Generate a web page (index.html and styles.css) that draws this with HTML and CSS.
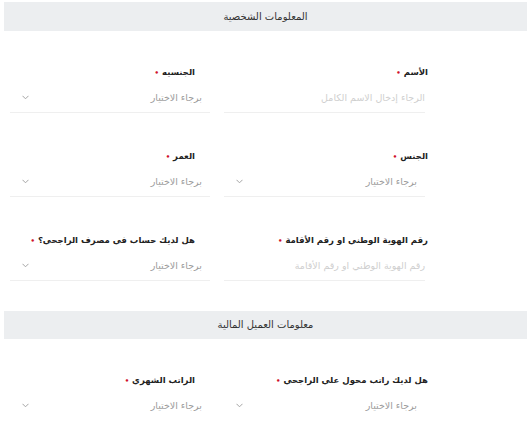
FILE: index.html
```html
<!DOCTYPE html>
<html lang="ar" dir="rtl">
<head>
<meta charset="utf-8">
<link rel="stylesheet" href="styles.css">
</head>
<body>
<div class="page">
  <div class="section-head">المعلومات الشخصية</div>
  <div class="grid g1">
    <div class="field">
      <div class="label">الأسم <span class="req">•</span></div>
      <div class="control input">الرجاء إدخال الاسم الكامل</div>
    </div>
    <div class="field left">
      <div class="label">الجنسيه <span class="req">•</span></div>
      <div class="control select"><span>برجاء الاختيار</span><svg class="chev" width="7" height="5" viewBox="0 0 7 5"><path d="M0.5 0.8 L3.5 3.8 L6.5 0.8" fill="none" stroke="#a5a5a5" stroke-width="1"/></svg></div>
    </div>
    <div class="field">
      <div class="label">الجنس <span class="req">•</span></div>
      <div class="control select"><span>برجاء الاختيار</span><svg class="chev" width="7" height="5" viewBox="0 0 7 5"><path d="M0.5 0.8 L3.5 3.8 L6.5 0.8" fill="none" stroke="#a5a5a5" stroke-width="1"/></svg></div>
    </div>
    <div class="field left">
      <div class="label">العمر <span class="req">•</span></div>
      <div class="control select"><span>برجاء الاختيار</span><svg class="chev" width="7" height="5" viewBox="0 0 7 5"><path d="M0.5 0.8 L3.5 3.8 L6.5 0.8" fill="none" stroke="#a5a5a5" stroke-width="1"/></svg></div>
    </div>
    <div class="field">
      <div class="label">رقم الهوية الوطني او رقم الأقامة <span class="req">•</span></div>
      <div class="control input">رقم الهوية الوطني او رقم الأقامة</div>
    </div>
    <div class="field left">
      <div class="label">هل لديك حساب في مصرف الراجحي؟ <span class="req">•</span></div>
      <div class="control select"><span>برجاء الاختيار</span><svg class="chev" width="7" height="5" viewBox="0 0 7 5"><path d="M0.5 0.8 L3.5 3.8 L6.5 0.8" fill="none" stroke="#a5a5a5" stroke-width="1"/></svg></div>
    </div>
  </div>
  <div class="section-head second">معلومات العميل المالية</div>
  <div class="grid g2">
    <div class="field">
      <div class="label">هل لديك راتب محول علي الراجحي <span class="req">•</span></div>
      <div class="control select"><span>برجاء الاختيار</span><svg class="chev" width="7" height="5" viewBox="0 0 7 5"><path d="M0.5 0.8 L3.5 3.8 L6.5 0.8" fill="none" stroke="#a5a5a5" stroke-width="1"/></svg></div>
    </div>
    <div class="field left">
      <div class="label">الراتب الشهري <span class="req">•</span></div>
      <div class="control select"><span>برجاء الاختيار</span><svg class="chev" width="7" height="5" viewBox="0 0 7 5"><path d="M0.5 0.8 L3.5 3.8 L6.5 0.8" fill="none" stroke="#a5a5a5" stroke-width="1"/></svg></div>
    </div>
  </div>
</div>
</body>
</html>
```
FILE: styles.css
```css
html, body {
  margin: 0;
  padding: 0;
  background: #ffffff;
  overflow: hidden;
}
body {
  font-family: "DejaVu Sans", "Noto Sans", sans-serif;
  color: #222;
}
.page {
  padding-top: 2px;
  width: 527px;
  height: 431px;
  overflow: hidden;
}
.section-head {
  margin-left: 4px;
  height: 29px;
  line-height: 29px;
  background: #eceef0;
  text-align: center;
  font-size: 10px;
  color: #333;
}
.section-head.second {
  margin-top: 30px;
  height: 28px;
  line-height: 28px;
}
.grid {
  display: grid;
  grid-template-columns: 201px 200px;
  column-gap: 14px;
  row-gap: 35px;
  padding-right: 102px;
}
.g1 { margin-top: 33px; }
.g2 { margin-top: 33px; }
.field {
  display: flex;
  flex-direction: column;
}
.label {
  height: 16px;
  line-height: 16px;
  font-size: 8.5px;
  font-weight: bold;
  color: #222;
  margin-bottom: 3px;
  margin-right: -3px;
  white-space: nowrap;
}
.field.left .label {
  margin-right: 15px;
}
.req {
  color: #d0112b;
  font-size: 7px;
}
.control {
  height: 29px;
  border-bottom: 1px solid #efefef;
  font-size: 9.5px;
  color: #bdbdbd;
  display: flex;
  align-items: center;
  box-sizing: content-box;
  white-space: nowrap;
}
.control.input {
  color: #cfcfcf;
}
.control.select {
  justify-content: space-between;
  padding-right: 8px;
  padding-left: 12px;
  color: #9b9b9b;
}
.g2 .control {
  border-bottom: none;
}
.chev {
  display: block;
}
```
